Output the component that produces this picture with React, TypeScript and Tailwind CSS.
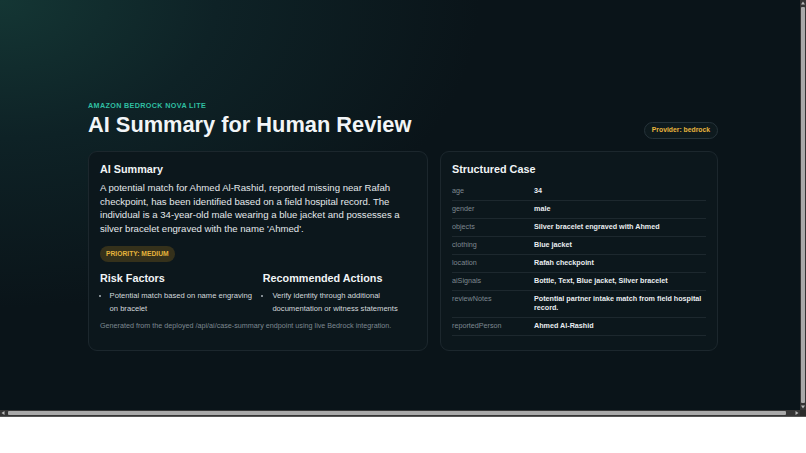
const caseRows: [string, string][] = [
  ["age", "34"],
  ["gender", "male"],
  ["objects", "Silver bracelet engraved with Ahmed"],
  ["clothing", "Blue jacket"],
  ["location", "Rafah checkpoint"],
  ["aiSignals", "Bottle, Text, Blue jacket, Silver bracelet"],
  ["reviewNotes", "Potential partner intake match from field hospital record."],
  ["reportedPerson", "Ahmed Al-Rashid"],
];

function SummaryCard() {
  return (
    <section className="rounded-[9px] border border-[#1c272d] bg-[#0c171c] px-[11px] pt-[11px] pb-[12px]">
      <h2 className="text-[10.8px] leading-[13px] font-bold text-[#f1f4f6]">AI Summary</h2>
      <p className="mt-[5px] text-[9.6px] leading-[13.6px] text-[#e4e8eb]">
        A potential match for Ahmed Al-Rashid, reported missing near Rafah checkpoint, has been identified based on a
        field hospital record. The individual is a 34-year-old male wearing a blue jacket and possesses a silver
        bracelet engraved with the name 'Ahmed'.
      </p>
      <div className="mt-[10.6px] flex">
        <span className="inline-flex h-[16px] items-center rounded-full bg-[#35311b] px-[6px] text-[6.72px] font-bold text-[#e5b43c]">
          PRIORITY: MEDIUM
        </span>
      </div>
      <div className="mt-[10.3px] grid grid-cols-2 gap-x-[9.6px]">
        <div>
          <h3 className="text-[10.8px] leading-[13px] font-bold text-[#f1f4f6]">Risk Factors</h3>
          <ul className="mt-[5px] list-disc pl-[9.6px] text-[7.6px] leading-[12.5px] text-[#d3d9dd] marker:text-[#aab3b9]">
            <li>Potential match based on name engraving on bracelet</li>
          </ul>
        </div>
        <div>
          <h3 className="text-[10.8px] leading-[13px] font-bold text-[#f1f4f6]">Recommended Actions</h3>
          <ul className="mt-[5px] list-disc pl-[9.6px] text-[7.6px] leading-[12.5px] text-[#d3d9dd] marker:text-[#aab3b9]">
            <li>Verify identity through additional documentation or witness statements</li>
          </ul>
        </div>
      </div>
      <p className="mt-[6px] text-[7.2px] leading-[10.8px] text-[#7c8890]">
        Generated from the deployed /api/ai/case-summary endpoint using live Bedrock integration.
      </p>
    </section>
  );
}

function CaseCard() {
  return (
    <section className="rounded-[9px] border border-[#1c272d] bg-[#0c171c] px-[11px] pt-[11px] pb-[14px]">
      <h2 className="text-[10.8px] leading-[13px] font-bold text-[#f1f4f6]">Structured Case</h2>
      <div className="mt-[6.5px]">
        {caseRows.map(([k, v]) => (
          <div key={k} className="grid grid-cols-[82px_1fr] border-b border-[#1d282e] py-[4.2px] text-[7.2px] leading-[8.7px]">
            <span className="text-[#7d8890]">{k}</span>
            <span className="font-bold text-[#e9edf0]">{v}</span>
          </div>
        ))}
      </div>
    </section>
  );
}

// tiny scrollbar arrow, pointing in the given direction
function Arrow({ dir }: { dir: "up" | "down" | "left" | "right" }) {
  const pts = {
    up: "3,1.5 5,4.5 1,4.5",
    down: "1,1.5 5,1.5 3,4.5",
    left: "1.5,3 4.5,1 4.5,5",
    right: "1.5,1 4.5,3 1.5,5",
  }[dir];
  return (
    <svg width="6" height="6" viewBox="0 0 6 6" className="shrink-0">
      <polygon points={pts} fill="#b9b9b9" />
    </svg>
  );
}

export default function App() {
  return (
    <div className="flex h-[417px] w-full flex-col bg-[#2e2e2e] font-['Liberation_Sans',Arial,sans-serif]">
      <div className="flex min-h-0 flex-1">
        <main className="min-w-0 flex-1 overflow-hidden bg-[#0a1419] bg-[radial-gradient(ellipse_60%_75%_at_0%_0%,#143634_0%,#0e2226_45%,#0a1419_100%)] pt-[101px] pl-[88px]">
          <div className="w-[630px]">
            <header className="mb-[13px] flex items-end justify-between">
              <div>
                <p className="text-[7.2px] leading-[10px] font-bold tracking-[0.36px] text-[#2fbfa2]">AMAZON BEDROCK NOVA LITE</p>
                <h1 className="mt-[1px] text-[21.8px] leading-[26px] font-bold text-[#f2f5f7]">AI Summary for Human Review</h1>
              </div>
              <span className="mb-[-1px] inline-flex h-[17px] items-center rounded-full border border-[#26333a] bg-[#0e1a1e] px-[7px] text-[6.8px] font-bold text-[#e8b53d]">
                Provider: bedrock
              </span>
            </header>
            <div className="grid grid-cols-[340px_278px] gap-[12px]">
              <SummaryCard />
              <CaseCard />
            </div>
          </div>
        </main>
        <div className="flex w-[6px] flex-col items-center bg-[#353535]">
          <Arrow dir="up" />
          <div className="my-[1px] w-[4px] flex-1 rounded-[1px] bg-[#a9a9a9]" />
          <Arrow dir="down" />
        </div>
      </div>
      <div className="flex h-[7px] items-center border-b border-[#555555] bg-[#353535]">
        <Arrow dir="left" />
        <div className="mr-[8px] ml-[2px] h-[4px] flex-1 rounded-[1px] bg-[#a9a9a9]" />
        <Arrow dir="right" />
        <div className="h-full w-[6px] bg-[#2a2a2a]" />
      </div>
    </div>
  );
}
